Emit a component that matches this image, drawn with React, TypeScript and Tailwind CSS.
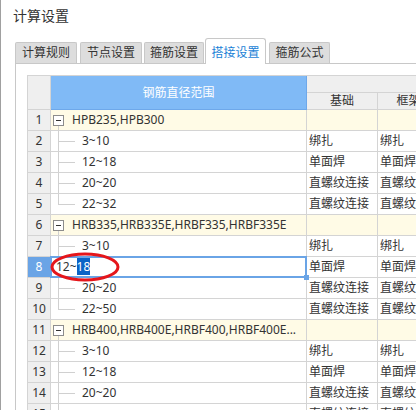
import React from "react";

type Row =
  | { kind: "group"; name: string }
  | { kind: "child"; name: string; a: string; last?: boolean; edit?: boolean };

const rows: Row[] = [
  { kind: "group", name: "HPB235,HPB300" },
  { kind: "child", name: "3~10", a: "绑扎" },
  { kind: "child", name: "12~18", a: "单面焊" },
  { kind: "child", name: "20~20", a: "直螺纹连接" },
  { kind: "child", name: "22~32", a: "直螺纹连接", last: true },
  { kind: "group", name: "HRB335,HRB335E,HRBF335,HRBF335E" },
  { kind: "child", name: "3~10", a: "绑扎" },
  { kind: "child", name: "12~18", a: "单面焊", edit: true },
  { kind: "child", name: "20~20", a: "直螺纹连接" },
  { kind: "child", name: "22~50", a: "直螺纹连接", last: true },
  { kind: "group", name: "HRB400,HRB400E,HRBF400,HRBF400E..." },
  { kind: "child", name: "3~10", a: "绑扎" },
  { kind: "child", name: "12~18", a: "单面焊" },
  { kind: "child", name: "20~20", a: "直螺纹连接" },
  { kind: "child", name: "", a: "直螺纹连接" },
];

const tabs = [
  { label: "计算规则", w: "w-[62px]", ml: "ml-0" },
  { label: "节点设置", w: "w-[62px]", ml: "ml-[3px]" },
  { label: "箍筋设置", w: "w-[60px]", ml: "ml-[2px]" },
  { label: "搭接设置", w: "w-[61px]", ml: "ml-[1px]", active: true },
  { label: "箍筋公式", w: "w-[61px]", ml: "ml-[3px]" },
];

const cell = "border-r border-b border-[#d4d4d4]";

function NameCell({ row }: { row: Row }) {
  if (row.kind === "group") {
    return (
      <div className={`${cell} flex h-full items-center bg-[#fffbe6] overflow-hidden`}>
        <div className="ml-[2px] flex h-full w-[11px] shrink-0 flex-col items-center">
          <div className="flex-1" />
          <div className="flex h-[11px] w-[11px] items-center justify-center border border-[#8c8c8c] bg-white">
            <div className="h-px w-[5px] bg-[#333]" />
          </div>
          <div className="w-px flex-1 bg-[#d0d0d0]" />
        </div>
        <span className="ml-[8px] whitespace-nowrap">{row.name}</span>
      </div>
    );
  }
  if (row.edit) {
    return (
      <div className={`${cell} relative flex h-full items-center bg-white`}>
        <span className="ml-[5px] whitespace-nowrap">
          12~<span className="bg-[#0b63c6] text-white">18</span>
        </span>
        <div className="pointer-events-none absolute -left-px -top-px bottom-[-1px] right-[-1px] border-2 border-[#6aa4e6]" />
        <div className="absolute bottom-[-3px] right-[-3px] h-[5px] w-[5px] bg-[#6aa4e6]" />
      </div>
    );
  }
  return (
    <div className={`${cell} flex h-full items-stretch bg-white`}>
      <div className="ml-[7px] flex w-[17px] shrink-0 flex-col">
        <div className="flex-1 border-b border-l border-[#d0d0d0]" />
        <div className={`flex-1 ${row.last ? "" : "border-l border-[#d0d0d0]"}`} />
      </div>
      <span className="ml-[7px] self-center whitespace-nowrap">{row.name}</span>
    </div>
  );
}

export default function App() {
  return (
    <div
      className="relative h-[410px] w-[416px] overflow-hidden border-l border-[#a0a0a0] bg-white text-[12px] text-[#333]"
      style={{ fontFamily: "'Noto Sans','Noto Sans CJK SC',sans-serif" }}
    >
      <div className="pl-[12px] pt-[6px] text-[14px] leading-[20px] text-[#333]">计算设置</div>

      <div className="mt-[12px] flex h-[25px] items-end pl-[14px]">
        {tabs.map((t) =>
          t.active ? (
            <div
              key={t.label}
              className={`${t.w} ${t.ml} relative z-10 -mb-px h-[26px] rounded-t-[3px] border border-b-0 border-[#c8c8c8] bg-white pt-[4px] text-center leading-[20px] text-[#1b7fd6]`}
            >
              {t.label}
            </div>
          ) : (
            <div
              key={t.label}
              className={`${t.w} ${t.ml} h-[21px] rounded-t-[2px] border border-b-0 border-[#c8c8c8] bg-[#dddddd] text-center leading-[20px] text-[#333]`}
            >
              {t.label}
            </div>
          )
        )}
      </div>

      <div className="ml-[14px] h-[400px] border-l border-t border-[#c8c8c8] pl-[11px] pt-[11px]">
        <div className="grid w-[420px] grid-cols-[23px_256px_71px_62px] grid-rows-[17px_17px] auto-rows-[21px] border-l border-t border-[#d4d4d4]">
          <div className={`${cell} row-span-2 bg-[#efefef]`} />
          <div className="row-span-2 flex items-center justify-center border-b border-r border-[#6ea8ea] bg-[#80baf6] text-white">
            钢筋直径范围
          </div>
          <div className={`${cell} col-span-2 bg-[#efefef]`} />
          <div className={`${cell} flex items-center justify-center bg-[#efefef] leading-[16px]`}>基础</div>
          <div className={`${cell} flex items-center justify-center bg-[#efefef] leading-[16px]`}>框架</div>

          {rows.map((row, i) => {
            const group = row.kind === "group";
            const edit = row.kind === "child" && row.edit;
            return (
              <React.Fragment key={i}>
                <div
                  className={`${cell} flex items-center justify-center ${
                    edit ? "bg-[#6aa4e6] text-white" : "bg-[#efefef]"
                  }`}
                >
                  {i + 1}
                </div>
                <NameCell row={row} />
                <div className={`${cell} flex items-center whitespace-nowrap pl-[2px] ${group ? "bg-[#fffbe6]" : "bg-white"}`}>
                  {row.kind === "child" ? row.a : ""}
                </div>
                <div className={`${cell} flex items-center overflow-hidden whitespace-nowrap pl-[2px] ${group ? "bg-[#fffbe6]" : "bg-white"}`}>
                  {row.kind === "child" ? row.a : ""}
                </div>
              </React.Fragment>
            );
          })}
        </div>
      </div>

      <svg className="pointer-events-none absolute left-[49px] top-[251px]" width="72" height="32" viewBox="0 0 72 32">
        <ellipse cx="35" cy="16" rx="33" ry="13" fill="none" stroke="#e5161b" strokeWidth="3" />
      </svg>
    </div>
  );
}
